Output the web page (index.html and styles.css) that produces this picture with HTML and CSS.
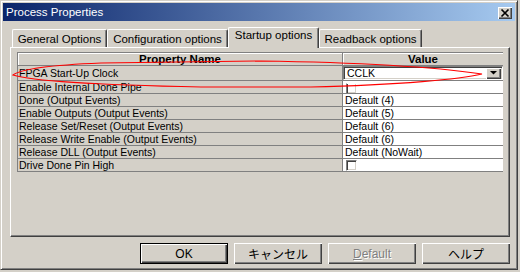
FILE: index.html
```html
<!DOCTYPE html>
<html>
<head>
<meta charset="utf-8">
<link rel="stylesheet" href="styles.css">
</head>
<body>
<div class="window">
  <div class="titlebar">
    <span class="title">Process Properties</span>
    <span class="close"><svg width="14" height="12" viewBox="0 0 14 12"><path d="M3.5 2.5 L10.5 9.5 M10.5 2.5 L3.5 9.5" stroke="#000" stroke-width="1.7" fill="none"/></svg></span>
  </div>
  <div class="content">
    <div class="tabs">
      <div class="tab t-general">General Options</div>
      <div class="tab t-config">Configuration options</div>
      <div class="tab t-startup active">Startup options</div>
      <div class="tab t-readback">Readback options</div>
    </div>
    <div class="panel">
      <div class="grid">
        <div class="hcell">Property Name</div>
        <div class="hcell">Value</div>
        <div class="name">FPGA Start-Up Clock</div>
        <div class="val val-combo">
          <div class="combo"><span class="combo-text">CCLK</span><span class="drop"><svg width="7" height="4" viewBox="0 0 7 4"><polygon points="0,0 7,0 3.5,3.5" fill="#000"/></svg></span></div>
        </div>
        <div class="name">Enable Internal Done Pipe</div>
        <div class="val"><span class="check clipped"></span></div>
        <div class="name">Done (Output Events)</div>
        <div class="val">Default (4)</div>
        <div class="name">Enable Outputs (Output Events)</div>
        <div class="val">Default (5)</div>
        <div class="name">Release Set/Reset (Output Events)</div>
        <div class="val">Default (6)</div>
        <div class="name">Release Write Enable (Output Events)</div>
        <div class="val">Default (6)</div>
        <div class="name">Release DLL (Output Events)</div>
        <div class="val">Default (NoWait)</div>
        <div class="name">Drive Done Pin High</div>
        <div class="val"><span class="check"></span></div>
      </div>
    </div>
    <div class="buttons">
      <div class="btn default-btn"><span>OK</span></div>
      <div class="btn"><span class="jp">キャンセル</span></div>
      <div class="btn disabled"><span><u>D</u>efault</span></div>
      <div class="btn"><span class="jp">ヘルプ</span></div>
    </div>
  </div>
  <svg class="annotation" width="518" height="270" viewBox="0 0 518 270">
    <path d="M12 74 C 20 68, 50 64, 100 62 L 260 60 C 330 61, 420 64, 481 73 C 460 78, 400 84, 310 86 L 200 86 C 100 84, 30 80, 12 74 Z" stroke="#ff0000" stroke-width="1.1" fill="none"/>
  </svg>
</div>
</body>
</html>
```

FILE: styles.css
```css
html, body {
  margin: 0;
  padding: 0;
  background: #d4d0c8;
}
body {
  width: 520px;
  height: 272px;
  overflow: hidden;
  font-family: "Liberation Sans", Arial, "Noto Sans CJK JP", sans-serif;
  font-size: 11.5px;
  color: #000;
}
.window {
  position: relative;
  width: 518px;
  height: 270px;
  box-sizing: border-box;
  background: #d4d0c8;
  border: 1px solid;
  border-color: #d4d0c8 #404040 #404040 #d4d0c8;
  box-shadow: inset 1px 1px #ffffff, inset -1px -1px #808080;
  padding: 2px;
}
.titlebar {
  height: 18px;
  display: flex;
  align-items: center;
  justify-content: space-between;
  background: linear-gradient(to right, #0a246a, #a6caf0);
  padding: 0 3px 0 3px;
}
.title {
  color: #ffffff;
  font-size: 11.5px;
  line-height: 18px;
}
.close {
  width: 14px;
  height: 12px;
  box-sizing: border-box;
  background: #d4d0c8;
  display: flex;
  box-shadow: inset 1px 1px #ffffff, inset -1px -1px #404040, inset -2px -2px #808080;
  margin-top: 2px;
}
.content {
  padding: 6px 5px 0 7px;
}
.tabs {
  display: flex;
  align-items: flex-end;
  height: 20px;
  padding-left: 2px;
}
.tab {
  height: 18px;
  box-sizing: border-box;
  background: #d4d0c8;
  border-top: 1px solid #ffffff;
  border-left: 1px solid #ffffff;
  border-right: 1px solid #404040;
  box-shadow: inset -1px 0 #808080;
  border-radius: 2px 2px 0 0;
  text-align: center;
  font-size: 11.5px;
  line-height: 16px;
  padding-top: 1px;
  white-space: nowrap;
}
.t-general { width: 95px; }
.t-config { width: 121px; }
.t-startup { width: 91px; }
.t-readback { width: 103px; }
.tab.active {
  position: relative;
  z-index: 1;
  height: 21px;
  margin-bottom: -1px;
  padding-top: 0;
  line-height: 15px;
}
.panel {
  height: 190px;
  box-sizing: border-box;
  border: 1px solid;
  border-color: #ffffff #404040 #404040 #ffffff;
  box-shadow: inset -1px -1px #808080;
  padding: 4px 0 0 6px;
}
.grid {
  display: grid;
  grid-template-columns: 324px 160px;
  grid-template-rows: 12px 14px repeat(7, 12px);
  gap: 1px;
  width: 486px;
  box-sizing: border-box;
  background: #808080;
  border: 1px solid #808080;
  font-size: 10.5px;
  line-height: 12px;
}
.hcell {
  background: #d4d0c8;
  font-weight: bold;
  font-size: 11.5px;
  text-align: center;
  box-shadow: inset 1px 1px #ffffff;
  line-height: 12px;
}
.name {
  background: #d4d0c8;
  padding-left: 1px;
  white-space: nowrap;
  overflow: hidden;
  display: flex;
  align-items: center;
}
.val {
  background: #ffffff;
  padding-left: 2px;
  white-space: nowrap;
  overflow: hidden;
  display: flex;
  align-items: center;
}
.val-combo {
  padding: 0;
}
.combo {
  width: 100%;
  height: 100%;
  box-sizing: border-box;
  background: #ffffff;
  border: 1px solid;
  border-color: #808080 #ffffff #ffffff #808080;
  box-shadow: inset 1px 1px #404040, inset -1px -1px #d4d0c8;
  display: flex;
  align-items: center;
  justify-content: space-between;
  padding: 1px 1px 1px 3px;
}
.combo-text {
  font-size: 10.5px;
  line-height: 12px;
}
.drop {
  width: 15px;
  height: 11px;
  box-sizing: border-box;
  background: #d4d0c8;
  box-shadow: inset 1px 1px #ffffff, inset -1px -1px #404040, inset -2px -2px #808080;
  display: flex;
  align-items: center;
  justify-content: center;
}
.check {
  display: block;
  width: 11px;
  height: 11px;
  box-sizing: border-box;
  margin-left: 1px;
  background: #ffffff;
  border: 1px solid;
  border-color: #808080 #ffffff #ffffff #808080;
  box-shadow: inset 1px 1px #404040, inset -1px -1px #d4d0c8;
}
.check.clipped {
  margin-top: 3px;
  border-top-color: #ffffff;
  box-shadow: inset 1px 0 #404040, inset -1px -1px #d4d0c8;
}
.buttons {
  display: flex;
  justify-content: flex-end;
  gap: 6px;
  margin-top: 6px;
}
.btn {
  width: 88px;
  height: 21px;
  box-sizing: border-box;
  background: #d4d0c8;
  box-shadow: inset 1px 1px #ffffff, inset -1px -1px #404040, inset -2px -2px #808080;
  display: flex;
  align-items: center;
  justify-content: center;
  font-size: 12px;
}
.default-btn {
  border: 1px solid #000000;
}
.jp {
  font-family: "Noto Sans CJK JP", sans-serif;
  font-size: 12px;
}
.disabled {
  color: #808080;
  text-shadow: 1px 1px #ffffff;
}
.annotation {
  position: absolute;
  left: 0;
  top: 0;
  pointer-events: none;
}
```
